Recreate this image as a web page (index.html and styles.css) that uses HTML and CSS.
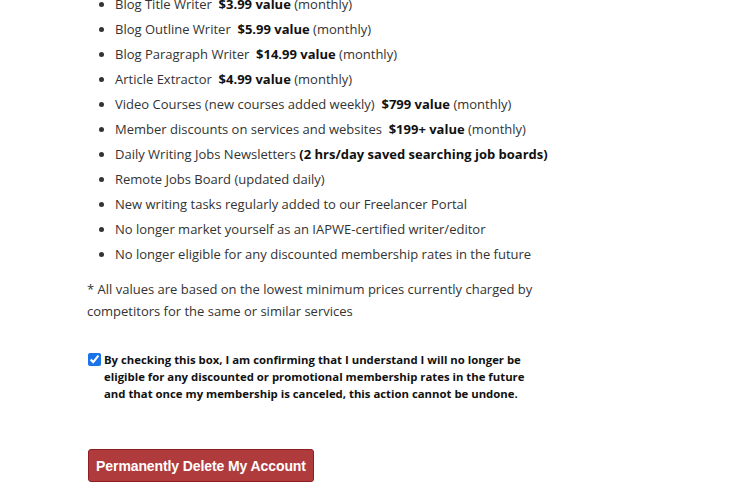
FILE: index.html
```html
<!DOCTYPE html>
<html lang="en">
<head>
    <meta charset="UTF-8">
    <meta name="viewport" content="width=device-width, initial-scale=1.0">
    <title>Delete Account</title>
    <link rel="stylesheet" href="styles.css">
</head>
<body>
    <div class="cancel-page">
        <ul class="benefits">
            <li>Blog Title Writer&nbsp; <b>$3.99 value</b> (monthly)</li>
            <li>Blog Outline Writer&nbsp; <b>$5.99 value</b> (monthly)</li>
            <li>Blog Paragraph Writer&nbsp; <b>$14.99 value</b> (monthly)</li>
            <li>Article Extractor&nbsp; <b>$4.99 value</b> (monthly)</li>
            <li>Video Courses (new courses added weekly)&nbsp; <b>$799 value</b> (monthly)</li>
            <li>Member discounts on services and websites&nbsp; <b>$199+ value</b> (monthly)</li>
            <li>Daily Writing Jobs Newsletters <b>(2 hrs/day saved searching job boards)</b></li>
            <li>Remote Jobs Board (updated daily)</li>
            <li>New writing tasks regularly added to our Freelancer Portal</li>
            <li>No longer market yourself as an IAPWE-certified writer/editor</li>
            <li>No longer eligible for any discounted membership rates in the future</li>
        </ul>
        <p class="note">* All values are based on the lowest minimum prices currently charged by competitors for the same or similar services</p>
        <label class="confirm">
            <input type="checkbox" checked>
            <span>By checking this box, I am confirming that I understand I will no longer be eligible for any discounted or promotional membership rates in the future and that once my membership is canceled, this action cannot be undone.</span>
        </label>
        <button class="delete-btn">Permanently Delete My Account</button>
    </div>
</body>
</html>
```
FILE: styles.css
```css
body {
    margin: 0;
    font-family: "Open Sans", sans-serif;
    color: #333;
    background-color: white;
}

.cancel-page {
    padding-left: 87px;
    margin-top: -8px;
    width: 470px;
}

.benefits {
    margin: 0;
    padding-left: 28px;
    font-size: 13px;
    line-height: 25px;
}

.benefits b {
    color: #111;
}

.note {
    margin: 11px 0 0;
    font-size: 13px;
    line-height: 22px;
}

.confirm {
    display: flex;
    align-items: flex-start;
    margin-top: 29px;
    font-size: 11.35px;
    font-weight: bold;
    line-height: 17px;
    color: #111;
}

.confirm input {
    margin: 2px 3px 0 1px;
    width: 13px;
    height: 13px;
    accent-color: #1a73e8;
    flex-shrink: 0;
}

.confirm span {
    max-width: 428px;
}

.delete-btn {
    display: block;
    margin: 47px 0 0 1px;
    padding: 0;
    height: 33px;
    width: 226px;
    background-color: #b03b3d;
    border: 1px solid #8e1e22;
    border-radius: 3px;
    color: white;
    font-family: "Liberation Sans", Arial, sans-serif;
    font-size: 14px;
    font-weight: bold;
    letter-spacing: -0.1px;
    white-space: nowrap;
    cursor: pointer;
}
```
